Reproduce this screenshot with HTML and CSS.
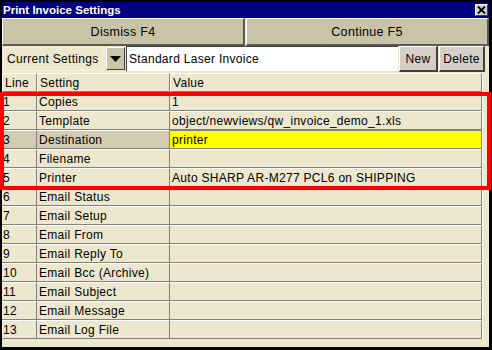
FILE: index.html
```html
<!DOCTYPE html>
<html lang="en">
  <head>
    <meta charset="UTF-8" />
    <meta name="viewport" content="width=device-width, initial-scale=1.0" />
    <title>Print Invoice Settings</title>
    <link rel="stylesheet" href="styles.css">
  </head>
  <body>
    <!-- window 窗口 -->
    <div class="window">
      <div class="titleBar">
        <span class="titleText">Print Invoice Settings</span>
        <span class="closeBtn">
          <svg width="9" height="8" viewBox="0 0 9 8"><path d="M1 0.5 L8 7.5 M8 0.5 L1 7.5" stroke="#000" stroke-width="1.8" fill="none"/></svg>
        </span>
      </div>
      <!-- 操作按钮 -->
      <div class="actionBar">
        <div class="bigBtn">Dismiss F4</div>
        <div class="bigBtn">Continue F5</div>
      </div>
      <!-- 当前设置 -->
      <div class="settingsBar">
        <div class="settingsLabel">Current Settings</div>
        <div class="dropBtn">
          <svg width="11" height="6" viewBox="0 0 11 6"><path d="M0 0 L11 0 L5.5 6 Z" fill="#000"/></svg>
        </div>
        <div class="settingsInput">Standard Laser Invoice</div>
        <div class="smallBtn newBtn">New</div>
        <div class="smallBtn deleteBtn">Delete</div>
      </div>
      <!-- 表格 -->
      <div class="gridArea">
        <div class="grid">
          <div class="gridHead">
            <div class="headCell">Line</div>
            <div class="headCell">Setting</div>
            <div class="headCell">Value</div>
          </div>
          <div class="gridRow"><div class="cell">1</div><div class="cell">Copies</div><div class="cell">1</div></div>
          <div class="gridRow"><div class="cell">2</div><div class="cell">Template</div><div class="cell">object/newviews/qw_invoice_demo_1.xls</div></div>
          <div class="gridRow current"><div class="cell">3</div><div class="cell">Destination</div><div class="cell editing">printer</div></div>
          <div class="gridRow"><div class="cell">4</div><div class="cell">Filename</div><div class="cell"></div></div>
          <div class="gridRow"><div class="cell">5</div><div class="cell">Printer</div><div class="cell">Auto SHARP AR-M277 PCL6 on SHIPPING</div></div>
          <div class="gridRow"><div class="cell">6</div><div class="cell">Email Status</div><div class="cell"></div></div>
          <div class="gridRow"><div class="cell">7</div><div class="cell">Email Setup</div><div class="cell"></div></div>
          <div class="gridRow"><div class="cell">8</div><div class="cell">Email From</div><div class="cell"></div></div>
          <div class="gridRow"><div class="cell">9</div><div class="cell">Email Reply To</div><div class="cell"></div></div>
          <div class="gridRow"><div class="cell">10</div><div class="cell">Email Bcc (Archive)</div><div class="cell"></div></div>
          <div class="gridRow"><div class="cell">11</div><div class="cell">Email Subject</div><div class="cell"></div></div>
          <div class="gridRow"><div class="cell">12</div><div class="cell">Email Message</div><div class="cell"></div></div>
          <div class="gridRow"><div class="cell">13</div><div class="cell">Email Log File</div><div class="cell"></div></div>
        </div>
      </div>
    </div>
    <!-- 红色标注框 -->
    <div class="markBox"></div>
  </body>
</html>
```

FILE: styles.css
```css
* {
  margin: 0;
  padding: 0;
  box-sizing: border-box;
}
body {
  width: 492px;
  height: 350px;
  padding: 2px 0 0 2px;
  background: #000;
  overflow: hidden;
  position: relative;
  font-family: "Liberation Sans", Arial, sans-serif;
  font-size: 12px;
  letter-spacing: 0.3px;
  color: #000;
}
.window {
  width: 487px;
  height: 345px;
  display: flex;
  flex-direction: column;
  background: #ede8cd;
}
.titleBar {
  height: 16px;
  display: flex;
  align-items: center;
  justify-content: space-between;
  background: #000080;
  padding: 0 1px 0 1px;
}
.titleText {
  color: #fff;
  font-weight: bold;
  font-size: 11.5px;
  letter-spacing: 0;
}
.closeBtn {
  width: 13px;
  height: 12px;
  display: flex;
  align-items: center;
  justify-content: center;
  background: #d4d0c8;
  border-top: 1px solid #fff;
  border-left: 1px solid #fff;
  border-right: 1px solid #404040;
  border-bottom: 1px solid #404040;
}
.actionBar {
  height: 28px;
  display: grid;
  grid-template-columns: 1fr 1fr;
  gap: 1px;
}
.bigBtn {
  display: flex;
  align-items: center;
  justify-content: center;
  background: #c9c4a8;
  border-top: 1px solid #fff;
  border-left: 1px solid #fff;
  border-right: 2px solid #5a5a50;
  border-bottom: 2px solid #5a5a50;
  font-size: 12.5px;
}
.settingsBar {
  height: 27px;
  display: flex;
  align-items: stretch;
  padding: 0 0 1px 1px;
}
.settingsLabel {
  width: 100px;
  margin: 1px 0 1px 0;
  padding-left: 3px;
  display: flex;
  align-items: center;
  border: 1px solid #f6f2e2;
}
.dropBtn {
  width: 19px;
  margin: 1px 1px 2px 3px;
  display: flex;
  align-items: center;
  justify-content: center;
  background: #c9c4a8;
  border-top: 1px solid #fff;
  border-left: 1px solid #fff;
  border-right: 1px solid #404040;
  border-bottom: 1px solid #404040;
}
.settingsInput {
  width: 272px;
  padding-left: 2px;
  display: flex;
  align-items: center;
  background: #fff;
  border-top: 1px solid #404040;
  border-left: 1px solid #404040;
  border-bottom: 1px solid #ede8cd;
}
.smallBtn {
  display: flex;
  align-items: center;
  justify-content: center;
  background: #d4d0c8;
  border-top: 1px solid #fff;
  border-left: 1px solid #fff;
  border-right: 2px solid #404040;
  border-bottom: 2px solid #404040;
}
.newBtn {
  width: 39px;
  margin-left: 1px;
}
.deleteBtn {
  width: 46px;
  margin-left: 1px;
}
.gridArea {
  flex: 1;
}
.grid {
  width: 481px;
  border-right: 1px solid #fff;
}
.gridHead,
.gridRow {
  display: grid;
  grid-template-columns: 35px 133px 312px;
  height: 19px;
}
.headCell {
  display: flex;
  align-items: center;
  padding-left: 2px;
  border-top: 1px solid #fff;
  border-left: 1px solid #fff;
  border-right: 1px solid #808080;
  border-bottom: 1px solid #808080;
}
.cell {
  display: flex;
  align-items: center;
  padding-left: 2px;
  white-space: nowrap;
  overflow: hidden;
  border-top: 1px solid #fff;
  border-bottom: 1px solid #808080;
  border-right: 1px solid #808080;
}
.cell:first-child {
  padding-left: 1px;
}
.current .cell {
  background: #d3ccb0;
}
.current .cell.editing {
  background: #ffff00;
  border-top: 1px solid #808080;
}
.markBox {
  position: absolute;
  left: 0;
  top: 92px;
  width: 491px;
  height: 98px;
  border: 4px solid #ff0000;
}
```
